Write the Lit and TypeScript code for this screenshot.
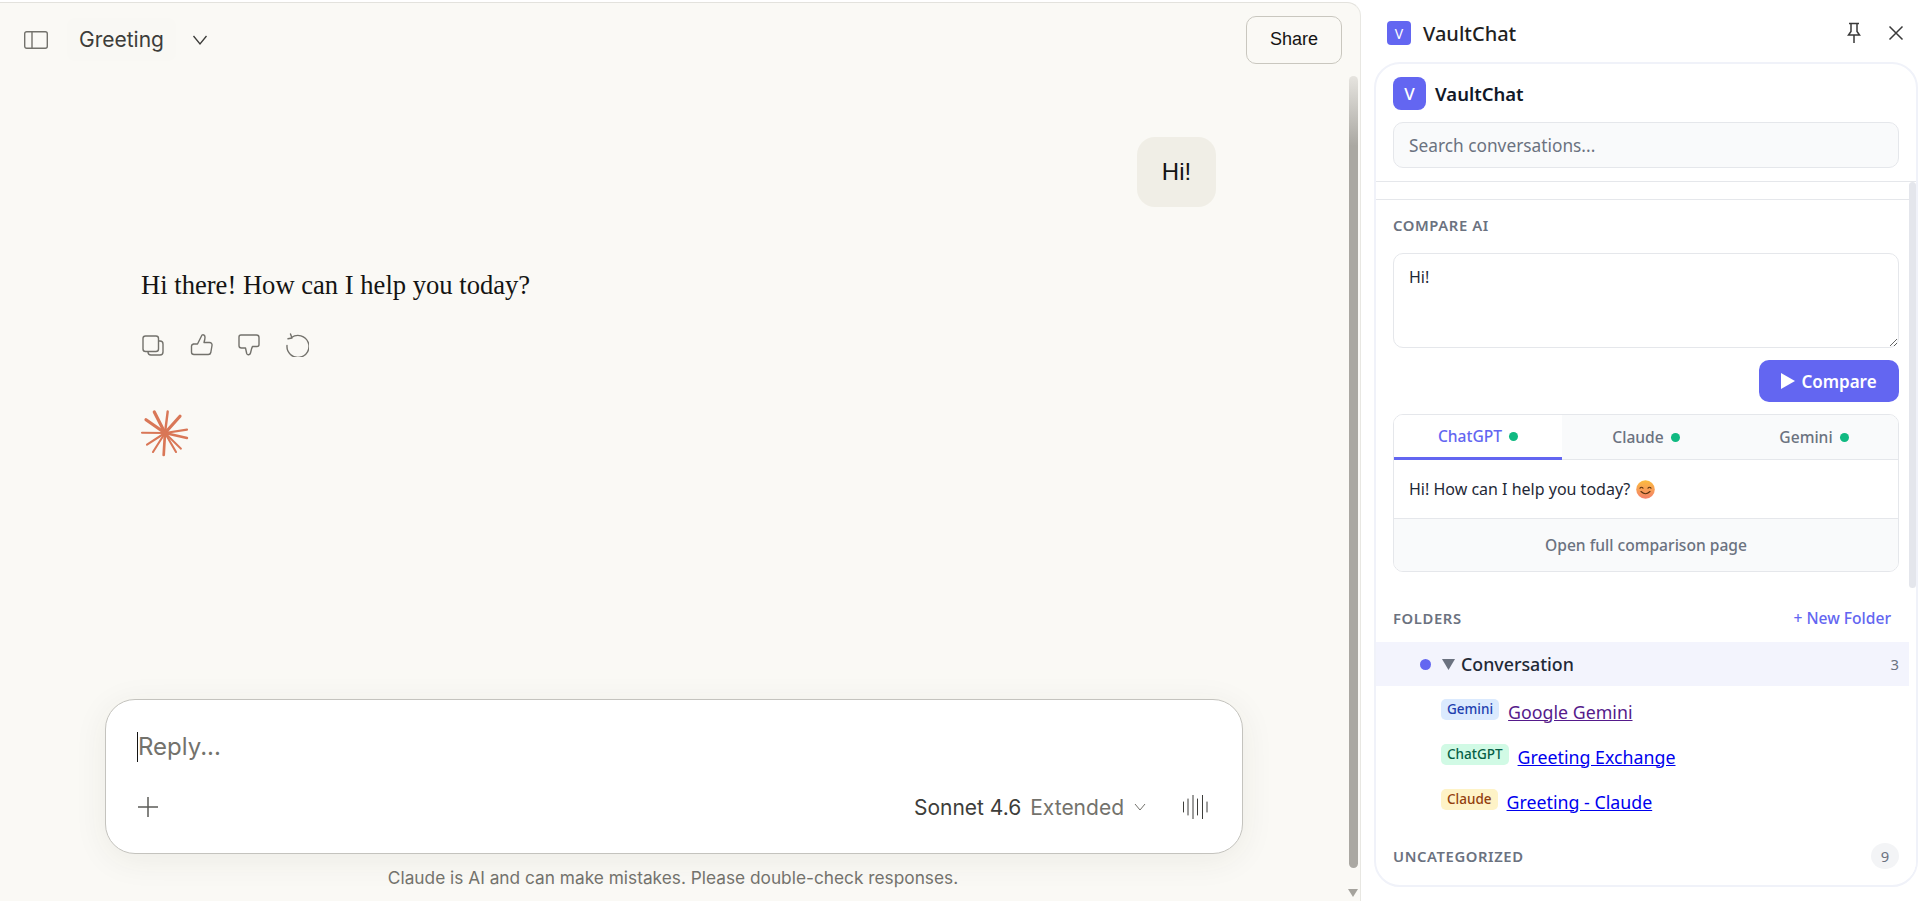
import { LitElement, html, css, svg } from 'lit';
import { customElement } from 'lit/decorators.js';

// rays of the spark: dx, dy, stroke width, all from the centre of a 48 box
const RAYS = [
  [-10.7, -21, 3.2], [2.7, -21.5, 2.4], [15, -16.7, 3.2], [22, -3.3, 2.2],
  [22, 5, 2.4], [16, 15.7, 1.9], [11, 19, 2.1], [-1.3, 22, 2.7],
  [-12, 19, 2.1], [-18, 11.7, 2.1], [-23, -0.3, 2.1], [-19, -13.3, 3.2],
];

const WAVE = [[1, 5], [5.5, 8], [10.5, 12], [15, 8], [20, 12], [24.5, 5]];

@customElement('app-root')
export class AppRoot extends LitElement {
  static styles = css`
    :host {
      display: flex;
      width: 100%;
      height: 901px;
      overflow: hidden;
      background: #fff;
    }
    * { box-sizing: border-box; }

    .main {
      width: 1361px;
      flex: none;
      display: flex;
      margin-top: 2px;
      border-top: 1px solid #e3e2dd;
      border-right: 1px solid #e8e7e2;
      border-top-right-radius: 14px;
      background: #faf9f5;
      overflow: hidden;
    }
    .chat {
      flex: 1;
      min-width: 0;
      display: flex;
      flex-direction: column;
    }
    .rail {
      width: 14px;
      flex: none;
      display: flex;
      flex-direction: column;
      align-items: center;
      padding-top: 73px;
    }
    .thumb {
      width: 9px;
      height: 792px;
      border-radius: 5px;
      background: linear-gradient(#e6e4df, #aaa8a2 70px, #aaa8a2);
    }
    .rail svg { margin-top: 21px; }

    .top {
      height: 73px;
      flex: none;
      display: flex;
      align-items: center;
      padding: 0 4px 0 24px;
      font-family: Inter, sans-serif;
    }
    .top .side { display: block; }
    .name {
      margin-left: 19px;
      padding: 0 12px;
      height: 43px;
      display: flex;
      align-items: center;
      font-size: 21px;
      color: #3d3d3a;
      background: #f9f8f4;
      border-radius: 8px;
    }
    .top .chev { margin-left: 16px; }
    .share {
      margin-left: auto;
      width: 96px;
      height: 48px;
      border: 1px solid #c9c7bf;
      border-radius: 10px;
      background: transparent;
      font: 18px 'Liberation Sans', Arial, sans-serif;
      color: #141413;
    }

    .thread {
      flex: 1;
      display: flex;
      flex-direction: column;
      padding: 61px 130px 0 141px;
    }
    .bubble {
      align-self: flex-end;
      width: 79px;
      height: 70px;
      display: flex;
      align-items: center;
      justify-content: center;
      background: #f0eee6;
      border-radius: 18px;
      font: 24px 'Liberation Sans', Arial, sans-serif;
      color: #141413;
    }
    .reply {
      margin-top: 62px;
      font: 26.6px/32px 'Liberation Serif', 'Times New Roman', serif;
      color: #141413;
    }
    .acts {
      margin-top: 32px;
      display: flex;
      gap: 24px;
      color: #73726c;
    }
    .spark { margin-top: 52px; display: block; }

    .composer {
      margin-left: 105px;
      width: 1138px;
      height: 155px;
      flex: none;
      display: flex;
      flex-direction: column;
      background: #fff;
      border: 1px solid #c4c3be;
      border-radius: 30px;
      box-shadow: 0 6px 34px rgba(60, 50, 30, 0.07);
      padding: 32px 30px 0 31px;
      font-family: Inter, sans-serif;
    }
    .input {
      height: 30px;
      font-size: 24px;
      line-height: 30px;
      color: #73726c;
      border-left: 1px solid #141413;
    }
    .tools {
      margin-top: 30px;
      display: flex;
      align-items: center;
      height: 30px;
      font-size: 21px;
    }
    .model { margin-left: auto; color: #3d3d3a; }
    .mode { margin-left: 9px; color: #73726c; }
    .tools .down { margin-left: 10px; }
    .tools .wave { margin-left: 33px; }
    .note {
      flex: none;
      height: 47px;
      display: flex;
      align-items: center;
      justify-content: center;
      font: 17.3px Inter, sans-serif;
      color: #73726c;
    }

    .panel {
      flex: 1;
      min-width: 0;
      display: flex;
      flex-direction: column;
      font-family: 'Noto Sans', sans-serif;
      padding-left: 13px;
      padding-right: 1px;
    }
    .bar {
      height: 62px;
      flex: none;
      display: flex;
      align-items: center;
      padding: 4px 14px 0 13px;
      color: #1f2937;
    }
    .badge {
      width: 24px;
      height: 24px;
      border-radius: 4px;
      background: #6366f1;
      color: #fff;
      font-size: 14px;
      display: flex;
      align-items: center;
      justify-content: center;
    }
    .bar .title {
      margin-left: 12px;
      font-size: 20px;
      font-weight: 500;
      color: #1f1f1f;
    }
    .bar .pin { margin-left: auto; }
    .bar .close { margin-left: 26px; }

    .card {
      height: 825px;
      border: 2px solid #f0f2f9;
      border-bottom-width: 2px;
      border-radius: 26px 26px 26px 26px;
      display: flex;
      flex-direction: column;
      overflow: hidden;
      background: #fff;
    }
    .head { padding: 13px 17px 13px 17px; flex: none; }
    .brand { display: flex; align-items: center; gap: 9px; }
    .logo {
      width: 33px;
      height: 33px;
      border-radius: 8px;
      background: #6366f1;
      color: #fff;
      font-size: 17px;
      font-weight: 500;
      display: flex;
      align-items: center;
      justify-content: center;
    }
    .brand span { font-size: 18.5px; font-weight: 600; color: #111827; }
    .search {
      display: block;
      width: 100%;
      height: 46px;
      margin-top: 12px;
      padding: 0 15px;
      border: 1px solid #e5e7eb;
      border-radius: 10px;
      background: #f9fafb;
      font: 17.3px 'Noto Sans', sans-serif;
      outline: none;
    }
    .search::placeholder { color: #6b7280; opacity: 1; }

    .body {
      flex: 1;
      min-height: 0;
      display: flex;
      border-top: 1px solid #e5e7eb;
    }
    .scroll { flex: 1; min-width: 0; }
    .track { width: 7px; flex: none; background: #fff; }
    .track div { height: 406px; background: #e4e6ec; border-radius: 4px; }
    .blank { height: 18px; border-bottom: 1px solid #e5e7eb; }
    .sec { padding: 0 10px 0 17px; }
    .sec-wide { padding: 0 10px 0 17px; }
    .label {
      font-size: 14.8px;
      line-height: 20px;
      font-weight: 600;
      letter-spacing: 0.6px;
      color: #6b7280;
    }
    .compare { padding-top: 15px; }
    textarea {
      display: block;
      width: 100%;
      height: 95px;
      margin-top: 18px;
      padding: 12px 15px;
      border: 1px solid #e5e7eb;
      border-radius: 10px;
      font: 16px 'Noto Sans', sans-serif;
      color: #1f2937;
      outline: none;
    }
    .go {
      display: flex;
      justify-content: flex-end;
      margin-top: 12px;
    }
    .go button {
      width: 140px;
      height: 42px;
      border: 0;
      border-radius: 10px;
      background: #6366f1;
      color: #fff;
      font: 600 17px 'Noto Sans', sans-serif;
      display: flex;
      align-items: center;
      justify-content: center;
      gap: 6px;
    }

    .result {
      margin-top: 12px;
      height: 158px;
      border: 1px solid #e5e7eb;
      border-radius: 10px;
      overflow: hidden;
      display: flex;
      flex-direction: column;
    }
    .tabs {
      display: flex;
      height: 45px;
      flex: none;
      background: #f9fafb;
      border-bottom: 1px solid #e5e7eb;
    }
    .tab {
      flex: 1;
      display: flex;
      align-items: center;
      justify-content: center;
      gap: 7px;
      font-size: 15.6px;
      font-weight: 500;
      color: #6b7280;
    }
    .tab.on {
      background: #fff;
      color: #6366f1;
      border-bottom: 3px solid #6366f1;
      margin-bottom: -1px;
    }
    .tab i {
      width: 9px;
      height: 9px;
      border-radius: 50%;
      background: #10b981;
    }
    .answer {
      height: 59px;
      flex: none;
      display: flex;
      align-items: center;
      gap: 6px;
      padding: 0 15px;
      font-size: 16px;
      color: #1f2937;
      border-bottom: 1px solid #e5e7eb;
    }
    .open {
      flex: 1;
      display: flex;
      align-items: center;
      justify-content: center;
      background: #f9fafb;
      font-size: 15.6px;
      font-weight: 500;
      color: #6b7280;
    }

    .folders-head {
      margin-top: 36px;
      display: flex;
      justify-content: space-between;
      padding-right: 8px;
    }
    .new { font-size: 15.6px; line-height: 20px; font-weight: 500; color: #6366f1; }
    .row {
      margin-top: 14px;
      height: 44px;
      display: flex;
      align-items: center;
      padding: 0 10px 0 44px;
      background: #f3f4fd;
    }
    .row b {
      width: 11px;
      height: 11px;
      border-radius: 50%;
      background: #6366f1;
    }
    .row svg { margin-left: 11px; }
    .row .fname {
      margin-left: 6px;
      font-size: 17.8px;
      font-weight: 500;
      color: #1f2937;
    }
    .row .n { margin-left: auto; font-size: 14.8px; color: #6b7280; }
    .items { padding: 3px 0 0 65px; }
    .item { height: 45px; display: flex; align-items: center; gap: 9px; }
    .tag {
      height: 21px;
      margin-top: -4px;
      padding: 0 6px;
      border-radius: 5px;
      font-size: 13.5px;
      line-height: 21px;
      font-weight: 500;
    }
    .tag.g { background: #dbeafe; color: #1e40af; }
    .tag.c { background: #d1fae5; color: #065f46; }
    .tag.a { background: #fef3c7; color: #92400e; }
    a { font-size: 17.8px; color: #0000ee; }
    a.seen { color: #551a8b; }
    .uncat {
      margin-top: 19px;
      display: flex;
      align-items: center;
      justify-content: space-between;
    }
    .count {
      width: 28px;
      height: 26px;
      border-radius: 50%;
      background: #f3f4f6;
      font-size: 14.8px;
      line-height: 26px;
      text-align: center;
      color: #6b7280;
    }
  `;

  render() {
    return html`
      <div class="main">
        <div class="chat">
          <div class="top">
            <svg class="side" width="24" height="18" viewBox="0 0 24 18" fill="none" stroke="#73726c" stroke-width="1.4">
              <rect x=".7" y=".7" width="22.6" height="16.6" rx="2"/><path d="M8 .7v16.6"/>
            </svg>
            <div class="name">Greeting</div>
            <svg class="chev" width="16" height="12" viewBox="0 0 16 12" fill="none" stroke="#3d3d3a" stroke-width="1.3"><path d="M1.5 2l6.5 8 6.5-8"/></svg>
            <button class="share">Share</button>
          </div>
          <div class="thread">
            <div class="bubble">Hi!</div>
            <div class="reply">Hi there! How can I help you today?</div>
            <div class="acts">
              <svg width="24" height="24" viewBox="0 0 24 24" fill="none" stroke="currentColor" stroke-width="1.4" stroke-linejoin="round">
                <rect x="2" y="3" width="15.5" height="15.5" rx="2.5"/><path d="M17.5 8h1.5a3 3 0 0 1 3 3v8a3 3 0 0 1-3 3h-9a3 3 0 0 1-3-3v-.5"/>
              </svg>
              <svg width="24" height="24" viewBox="0 0 24 24" fill="none" stroke="currentColor" stroke-width="1.4" stroke-linejoin="round">
                <path d="M4 11.5h4.5L13 2.5c1.500-.8 3 .3 3 2.200 0 1.800-.5 3.600-1 5.300h5.500c1.800 0 2.800 1.300 2.500 3l-1.200 7c-.3 1.500-1.200 2-2.500 2H5c-1.500 0-2.500-1-2.500-2.500v-6c0-.9.6-1.500 1.500-1.500z" transform="translate(0 -.5)"/>
              </svg>
              <svg width="24" height="24" viewBox="0 0 24 24" fill="none" stroke="currentColor" stroke-width="1.4" stroke-linejoin="round">
                <path d="M4 2h15.500c1.500 0 2.500 1 2.500 2.500v7c0 1.200-.8 2-2 2h-4.500c-1 1.500-1.500 4-2 6.500-.4 2-3 2.500-3.800.5L8.500 15H4.500c-1.500 0-2.500-1-2.500-2.500V4c0-1.200.8-2 2-2z"/>
              </svg>
              <svg width="24" height="24" viewBox="0 0 24 24" fill="none" stroke="currentColor" stroke-width="1.4" stroke-linecap="round" stroke-linejoin="round">
                <path d="M6.500 4.500A11 11 0 1 1 2 12.500M5.500 1l1.500 4-4 .8"/>
              </svg>
            </div>
            <svg class="spark" width="48" height="48" viewBox="0 0 48 48" stroke="#d97757" stroke-linecap="round">
              <circle cx="24" cy="24" r="3.500" fill="#d97757" stroke="none"/>
              ${RAYS.map(([x, y, w]) => svg`<line x1="24" y1="24" x2=${24 + x} y2=${24 + y} stroke-width=${w}/>`)}
            </svg>
          </div>
          <div class="composer">
            <div class="input">Reply...</div>
            <div class="tools">
              <svg class="plus" width="22" height="22" viewBox="0 0 22 22" stroke="#5c5c58" stroke-width="1.5" fill="none"><path d="M11 1v20M1 11h20"/></svg>
              <span class="model">Sonnet 4.6</span>
              <span class="mode">Extended</span>
              <svg class="down" width="12" height="8" viewBox="0 0 12 8" fill="none" stroke="#73726c" stroke-width="1"><path d="M1 1l5 6 5-6"/></svg>
              <svg class="wave" width="33" height="24" viewBox="0 0 26 24" stroke="#3d3d3a" stroke-width="1" stroke-linecap="round">
                ${WAVE.map(([x, h]) => svg`<line x1=${x} x2=${x} y1=${12 - h} y2=${12 + h}/>`)}
              </svg>
            </div>
          </div>
          <div class="note">Claude is AI and can make mistakes. Please double-check responses.</div>
        </div>
        <div class="rail">
          <div class="thumb"></div>
          <svg width="10" height="8" viewBox="0 0 10 8" fill="#a5a39d"><path d="M0 0h10L5 8z"/></svg>
        </div>
      </div>

      <div class="panel">
        <div class="bar">
          <div class="badge">V</div>
          <span class="title">VaultChat</span>
          <svg class="pin" width="16" height="22" viewBox="0 0 16 22" fill="none" stroke="#3a3a3a" stroke-width="1.500"><path d="M3 1.500h10M5 1.500v8L2.500 13h11L11 9.500v-8M8 13v8"/></svg>
          <svg class="close" width="16" height="16" viewBox="0 0 16 16" fill="none" stroke="#3a3a3a" stroke-width="1.500"><path d="M1.500 1.500l13 13M14.500 1.500l-13 13"/></svg>
        </div>
        <div class="card">
          <div class="head">
            <div class="brand"><div class="logo">V</div><span>VaultChat</span></div>
            <input class="search" placeholder="Search conversations..." />
          </div>
          <div class="body">
            <div class="scroll">
              <div class="blank"></div>
              <div class="sec compare">
                <div class="label">COMPARE AI</div>
                <textarea .value=${'Hi!'}></textarea>
                <div class="go">
                  <button>
                    <svg width="14" height="16" viewBox="0 0 14 16" fill="#fff"><path d="M0 0l14 8-14 8z"/></svg>
                    Compare
                  </button>
                </div>
                <div class="result">
                  <div class="tabs">
                    <div class="tab on">ChatGPT <i></i></div>
                    <div class="tab">Claude <i></i></div>
                    <div class="tab">Gemini <i></i></div>
                  </div>
                  <div class="answer">
                    Hi! How can I help you today?
                    <svg width="19" height="19" viewBox="0 0 19 19">
                      <defs>
                        <linearGradient id="face" x1="0" y1="0" x2="0" y2="1">
                          <stop offset="0" stop-color="#fbbc3f"/><stop offset="1" stop-color="#f4806a"/>
                        </linearGradient>
                      </defs>
                      <circle cx="9.500" cy="9.500" r="9.300" fill="url(#face)"/>
                      <path d="M4 8.200q1.500-2 3 0M12 8.200q1.500-2 3 0M5 11.500q4.500 4.500 9 0" fill="none" stroke="#5a3310" stroke-width="1.100" stroke-linecap="round"/>
                    </svg>
                  </div>
                  <div class="open">Open full comparison page</div>
                </div>
                <div class="folders-head">
                  <div class="label">FOLDERS</div>
                  <div class="new">+ New Folder</div>
                </div>
              </div>
              <div class="row">
                <b></b>
                <svg width="13" height="11" viewBox="0 0 13 11" fill="#6b7280"><path d="M0 0h13L6.500 11z"/></svg>
                <span class="fname">Conversation</span>
                <span class="n">3</span>
              </div>
              <div class="items">
                <div class="item"><span class="tag g">Gemini</span><a class="seen" href="#">Google Gemini</a></div>
                <div class="item"><span class="tag c">ChatGPT</span><a href="#">Greeting Exchange</a></div>
                <div class="item"><span class="tag a">Claude</span><a href="#">Greeting - Claude</a></div>
              </div>
              <div class="sec uncat">
                <div class="label">UNCATEGORIZED</div>
                <div class="count">9</div>
              </div>
            </div>
            <div class="track"><div></div></div>
          </div>
        </div>
      </div>
    `;
  }
}
